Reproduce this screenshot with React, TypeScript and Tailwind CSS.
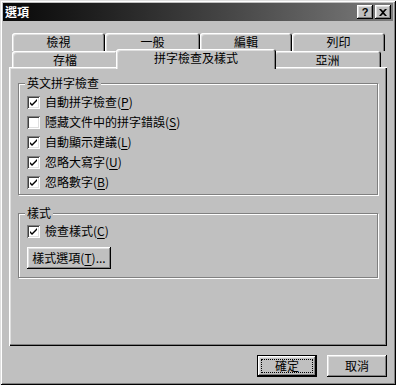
import React from "react";

const raised =
  "shadow-[inset_-1px_-1px_0_#000,inset_1px_1px_0_#fff,inset_-2px_-2px_0_#808080,inset_2px_2px_0_#dfdfdf]";
const sunken =
  "shadow-[inset_1px_1px_0_#808080,inset_-1px_-1px_0_#fff,inset_2px_2px_0_#404040,inset_-2px_-2px_0_#dfdfdf]";
const tabEdge =
  "shadow-[inset_1px_1px_0_#fff,inset_-1px_0_0_#000,inset_-2px_0_0_#808080,inset_2px_2px_0_#dfdfdf] rounded-t-[3px]";

function Mn({ pre, k, post = "" }: { pre: string; k: string; post?: string }) {
  return (
    <span>
      {pre}(<span className="underline underline-offset-2">{k}</span>){post}
    </span>
  );
}

function Check({ checked, children }: { checked: boolean; children: React.ReactNode }) {
  return (
    <div className="flex items-center h-[20px] gap-[5px]">
      <div className={`w-[13px] h-[13px] bg-white ${sunken} flex items-center justify-center`}>
        {checked && (
          <svg width="13" height="13" viewBox="0 0 13 13">
            <path d="M3 6 L5 8 L10 3 L10 5 L5 10 L3 8 Z" fill="#000" />
          </svg>
        )}
      </div>
      <div className="text-[12px] leading-none text-black">{children}</div>
    </div>
  );
}

function Tab({ w, label, selected = false }: { w: string; label: string; selected?: boolean }) {
  return (
    <div
      className={`${w} ${tabEdge} bg-[#c0c0c0] flex justify-center ${
        selected ? "h-[20px] -mx-[2px] -mb-[2px] relative z-10 pt-[2px]" : "h-[18px] pt-[2px]"
      } text-[12px] leading-[14px] text-black`}
    >
      {label}
    </div>
  );
}

export default function App() {
  return (
    <div className="w-[396px] h-[385px] bg-[#c0c0c0] font-['Noto_Sans_CJK_TC','Noto_Sans',sans-serif] shadow-[inset_1px_1px_0_#dfdfdf,inset_-1px_-1px_0_#000,inset_2px_2px_0_#fff,inset_-2px_-2px_0_#808080] p-[3px] overflow-hidden">
      {/* title bar */}
      <div className="h-[18px] bg-gradient-to-r from-[#080808] to-[#7c7c7c] flex items-center justify-between pl-[2px] pr-[2px]">
        <span className="text-white font-bold text-[12px] leading-none">選項</span>
        <div className="flex gap-[2px]">
          <div className={`w-[16px] h-[14px] ${raised} bg-[#c0c0c0] flex items-center justify-center text-[11px] font-bold leading-none text-black font-['Liberation_Sans',sans-serif]`}>
            ?
          </div>
          <div className={`w-[16px] h-[14px] ${raised} bg-[#c0c0c0] flex items-center justify-center`}>
            <svg width="8" height="7" viewBox="0 0 8 7">
              <path d="M0 0 H2 L4 2 L6 0 H8 L5 3.5 L8 7 H6 L4 5 L2 7 H0 L3 3.5 Z" fill="#000" />
            </svg>
          </div>
        </div>
      </div>

      <div className="pl-[6px] pt-[12px]">
        {/* tabs */}
        <div className="pl-[3px] w-[378px]">
          <div className="flex">
            <Tab w="w-[93px]" label="檢視" />
            <Tab w="w-[95px]" label="一般" />
            <Tab w="w-[92px]" label="編輯" />
            <Tab w="w-[93px]" label="列印" />
          </div>
          <div className="flex items-end h-[16px]">
            <div className="w-[106px] h-[16px] overflow-hidden">
              <Tab w="w-[106px]" label="存檔" />
            </div>
            <Tab w="w-[160px]" label="拼字檢查及樣式" selected />
            <div className="w-[107px] h-[16px] overflow-hidden">
              <Tab w="w-[107px]" label="亞洲" />
            </div>
          </div>
        </div>

        {/* panel */}
        <div className="w-[378px] h-[279px] shadow-[inset_1px_1px_0_#fff,inset_-1px_-1px_0_#000,inset_-2px_-2px_0_#808080,inset_2px_2px_0_#dfdfdf] pt-[16px] pl-[9px]">
          <div className="relative w-[360px] h-[112px] border border-[#808080] shadow-[inset_1px_1px_0_#fff,1px_1px_0_#fff] pt-[8px] pl-[8px]">
            <div className="absolute -top-[8px] left-[6px] px-[2px] bg-[#c0c0c0] text-[12px] leading-[14px] text-black">
              英文拼字檢查
            </div>
            <Check checked>
              <Mn pre="自動拼字檢查" k="P" />
            </Check>
            <Check checked={false}>
              <Mn pre="隱藏文件中的拼字錯誤" k="S" />
            </Check>
            <Check checked>
              <Mn pre="自動顯示建議" k="L" />
            </Check>
            <Check checked>
              <Mn pre="忽略大寫字" k="U" />
            </Check>
            <Check checked>
              <Mn pre="忽略數字" k="B" />
            </Check>
          </div>

          <div className="relative mt-[18px] w-[360px] h-[65px] border border-[#808080] shadow-[inset_1px_1px_0_#fff,1px_1px_0_#fff] pt-[7px] pl-[8px]">
            <div className="absolute -top-[8px] left-[6px] px-[2px] bg-[#c0c0c0] text-[12px] leading-[14px] text-black">
              樣式
            </div>
            <Check checked>
              <Mn pre="檢查樣式" k="C" />
            </Check>
            <div className={`mt-[6px] w-[84px] h-[22px] ${raised} flex items-center justify-center text-[12px] leading-none text-black`}>
              <Mn pre="樣式選項" k="T" post="..." />
            </div>
          </div>
        </div>

        {/* bottom buttons */}
        <div className="flex justify-end gap-[10px] pt-[9px] w-[378px]">
          <div className="w-[60px] h-[22px] border border-black">
            <div className={`w-full h-full ${raised} flex items-center justify-center p-[3px]`}>
              <div className="w-full h-full border border-dotted border-black flex items-center justify-center text-[12px] leading-none text-black">
                確定
              </div>
            </div>
          </div>
          <div className={`w-[60px] h-[22px] ${raised} flex items-center justify-center text-[12px] leading-none text-black`}>
            取消
          </div>
        </div>
      </div>
    </div>
  );
}
